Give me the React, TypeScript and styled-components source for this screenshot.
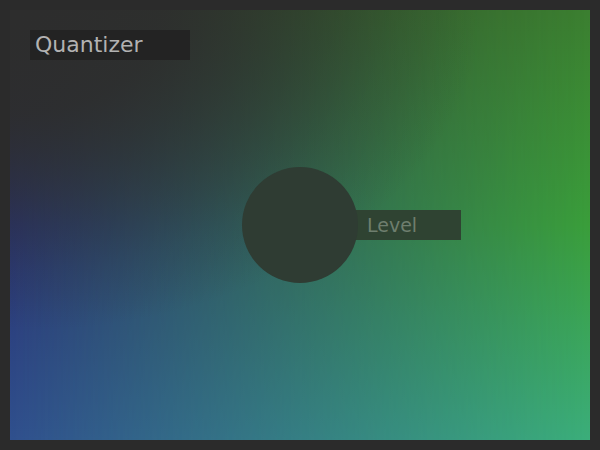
import React from "react";
import styled, { createGlobalStyle } from "styled-components";

const Global = createGlobalStyle`
  html, body { margin: 0; padding: 0; background: #2b2b2b; }
  body { font-family: "DejaVu Sans", Verdana, sans-serif; }
`;

const Page = styled.div`
  width: 600px;
  height: 450px;
  box-sizing: border-box;
  padding: 10px;
  background: #2b2b2b;
`;

const Canvas = styled.div`
  position: relative;
  width: 580px;
  height: 430px;
  display: grid;
  grid-template: 1fr / 1fr;
  background: linear-gradient(to bottom, #2d2d2d 0%, #2a3575 50%, #30508e 100%);
  isolation: isolate;
  &::before {
    content: "";
    position: absolute;
    inset: 0;
    z-index: -2;
    background: linear-gradient(to bottom, #3b7f30 0%, #3a9e3a 50%, #3bae7a 100%);
    -webkit-mask-image: linear-gradient(to right, transparent, #000);
    mask-image: linear-gradient(to right, transparent, #000);
  }
  &::after {
    content: "";
    position: absolute;
    inset: 0;
    z-index: -1;
    background: radial-gradient(
      ellipse 760px 520px at 0 0,
      rgba(45, 45, 45, 1) 0%,
      rgba(45, 45, 45, 0.9) 20%,
      rgba(45, 45, 45, 0.55) 35%,
      rgba(45, 45, 45, 0.2) 50%,
      rgba(45, 45, 45, 0) 62%
    );
  }
`;

const Title = styled.div`
  grid-area: 1 / 1;
  align-self: start;
  justify-self: start;
  margin: 20px 0 0 20px;
  width: 160px;
  height: 30px;
  box-sizing: border-box;
  padding-left: 5px;
  background: #232323;
  color: #b2b2b2;
  font-size: 22px;
  line-height: 30px;
`;

const KnobWrap = styled.div`
  grid-area: 1 / 1;
  place-self: center;
  position: relative;
  width: 116px;
  height: 116px;
`;

const Knob = styled.div`
  width: 116px;
  height: 116px;
  border-radius: 50%;
  background: #2f3c33;
  position: relative;
  z-index: 1;
`;

const KnobLabel = styled.div`
  position: absolute;
  left: 113px;
  top: 43px;
  width: 106px;
  height: 30px;
  box-sizing: border-box;
  padding-left: 12px;
  background: #2f4332;
  color: #6e7e6e;
  font-size: 19px;
  line-height: 30px;
`;

export default function App() {
  return (
    <>
      <Global />
      <Page>
        <Canvas>
          <Title>Quantizer</Title>
          <KnobWrap>
            <Knob />
            <KnobLabel>Level</KnobLabel>
          </KnobWrap>
        </Canvas>
      </Page>
    </>
  );
}
